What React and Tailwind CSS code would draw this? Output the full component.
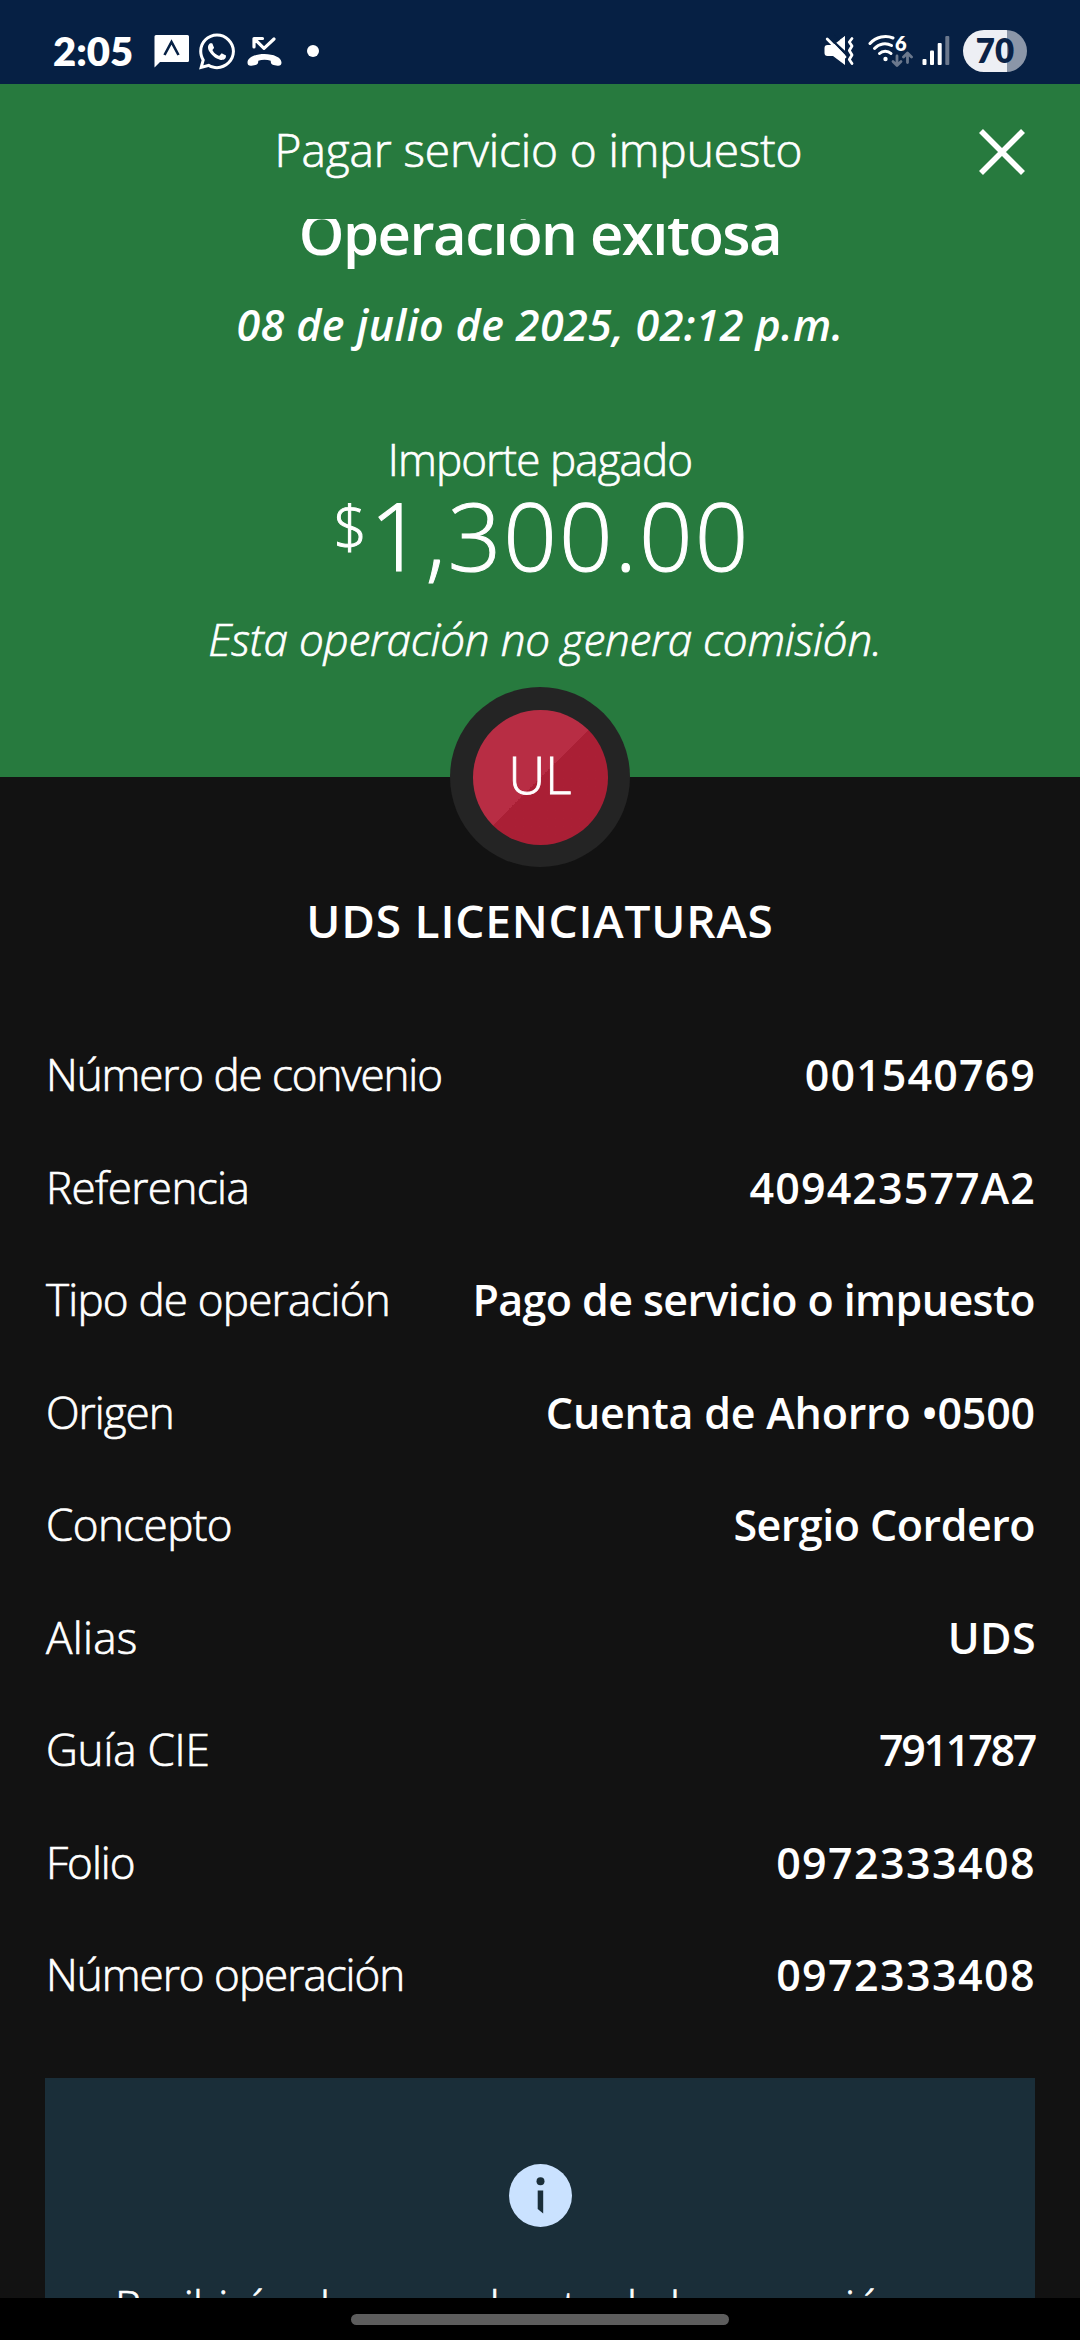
import { FaWhatsapp } from 'react-icons/fa';

const details = [
  { label: 'Número de convenio', value: '001540769', labelClass: 'tracking-[-1.1px]', valueClass: 'tracking-[1.1px] -mr-px' },
  { label: 'Referencia', value: '409423577A2', labelClass: 'tracking-[-0.6px]', valueClass: 'tracking-[1.1px] -mr-px' },
  { label: 'Tipo de operación', value: 'Pago de servicio o impuesto', labelClass: 'tracking-[-0.8px]', valueClass: 'tracking-[-0.6px]' },
  { label: 'Origen', value: 'Cuenta de Ahorro •0500', labelClass: 'tracking-[-1px]', valueClass: 'tracking-[-0.2px]' },
  { label: 'Concepto', value: 'Sergio Cordero', labelClass: 'tracking-[-0.6px]', valueClass: 'tracking-[-0.5px]' },
  { label: 'Alias', value: 'UDS', labelClass: 'tracking-[0.3px]', valueClass: 'tracking-[0.4px] -mr-px' },
  { label: 'Guía CIE', value: '7911787', labelClass: 'tracking-[-0.2px]', valueClass: 'tracking-[-2.3px]' },
  { label: 'Folio', value: '0972333408', labelClass: 'tracking-[-1px]', valueClass: 'tracking-[1.4px] -mr-px' },
  { label: 'Número operación', value: '0972333408', labelClass: 'tracking-[-1px]', valueClass: 'tracking-[1.4px] -mr-px' },
];

function ChatIcon() {
  return (
    <svg className="w-9 h-[42px]" viewBox="0 0 36 42" fill="none">
      <path d="M2 5H33.5Q35 5 35 6.500V30.500Q35 32 33.500 32H6L0.500 37.500V6.500Q0.500 5 2 5Z" fill="#fff" />
      <path d="M10.500 25L17.500 12L24.500 25" stroke="#062044" strokeWidth="2.600" />
    </svg>
  );
}

function MissedCallIcon() {
  return (
    <svg className="w-[35px] h-[42px]" viewBox="0 0 35 42" fill="none">
      <path
        d="M15.500 8.500H7V17M7.500 9L17 18.300L27 9"
        stroke="#fff"
        strokeWidth="3.200"
        strokeLinecap="round"
        strokeLinejoin="round"
      />
      <path
        d="M17.500 24C8.500 24 0.500 27.500 0.500 32.500C0.500 35 2 36 4.500 35.700L8.500 35C10.500 34.600 11.300 33.500 11.300 30.800C15 29.300 20 29.300 23.700 30.800C23.700 33.500 24.500 34.600 26.500 35L30.500 35.700C33 36 34.500 35 34.500 32.500C34.500 27.500 26.500 24 17.500 24Z"
        fill="#fff"
      />
    </svg>
  );
}

function MuteIcon() {
  return (
    <svg className="w-[31px] h-[42px]" viewBox="0 0 31 42" fill="none">
      <path d="M3.500 15H9L21 6V35L9 26H3.500Q0.500 26 0.500 23V18Q0.500 15 3.500 15Z" fill="#fff" />
      <path d="M0 3H9L21 16V25Z" fill="#062044" />
      <path d="M12.300 12.800L21 6.200V20.800Z" fill="#fff" />
      <path d="M3.200 9L21 27" stroke="#fff" strokeWidth="2.800" strokeLinecap="round" />
      <path
        d="M28 8.500L25.300 12L28 16L25.300 20.500L28 25L25.300 29.500L28 33.500"
        stroke="#fff"
        strokeWidth="2.800"
        strokeLinecap="round"
        strokeLinejoin="round"
      />
    </svg>
  );
}

function WifiIcon() {
  return (
    <div className="relative w-[45px] h-[42px]">
      <svg className="w-[45px] h-[42px]" viewBox="0 0 45 42" fill="none">
        <g stroke="#fff" strokeWidth="3" strokeLinecap="round">
          <path d="M2 13.500C8 6.500 18 5 25 8" />
          <path d="M6.500 18.500C11 13.500 18 12.500 23.500 15.500" />
          <path d="M11.500 23.500C14.500 20.500 20 20.500 23 23.500" />
        </g>
        <circle cx="17.500" cy="29" r="2.200" fill="#fff" />
        <g stroke="#6b788d" strokeWidth="2.800" strokeLinecap="round" strokeLinejoin="round">
          <path d="M29 26V35.500M25 31.500L29 35.500L33 31.500" />
          <path d="M39.500 32.500V23.500M35.500 27L39.500 23L43.500 27" />
        </g>
      </svg>
      <span className="absolute left-[27px] top-[3px] text-[20px] leading-5 font-extrabold font-['Lato',sans-serif]">6</span>
    </div>
  );
}

function SignalIcon() {
  return (
    <svg className="w-[28px] h-[42px]" viewBox="0 0 28 42" fill="#fff">
      <rect x="0.500" y="29" width="4" height="6" rx="1" />
      <rect x="8" y="20.500" width="4" height="14.500" rx="1" />
      <rect x="15.700" y="13" width="4" height="22" rx="1" />
      <rect x="23.300" y="6" width="4" height="29" rx="1" fill="#6b788d" />
    </svg>
  );
}

function StatusBar() {
  return (
    <div className="flex h-[84px] shrink-0 items-center justify-between bg-[#062044] pt-[18px] pl-[53px] pr-[53px] font-['Lato',sans-serif]">
      <div className="flex items-center">
        <span className="w-[101px] text-[40px] leading-[40px] font-extrabold">2:05</span>
        <ChatIcon />
        <FaWhatsapp className="ml-[9px] w-9 h-[41px]" />
        <div className="ml-3">
          <MissedCallIcon />
        </div>
        <div className="ml-[25px] size-3 rounded-full bg-white" />
      </div>
      <div className="flex items-center">
        <MuteIcon />
        <div className="ml-[13px]">
          <WifiIcon />
        </div>
        <div className="ml-[9px]">
          <SignalIcon />
        </div>
        <div className="ml-[13px] flex h-[42px] w-16 items-center justify-center rounded-full bg-linear-to-r from-[#edeff4] from-69% to-[#8b96a8] to-69% pb-[2px]">
          <span className="text-[33px] leading-[40px] font-extrabold text-[#0a2246]">70</span>
        </div>
      </div>
    </div>
  );
}

function TitleBar() {
  return (
    <div className="flex h-[135px] shrink-0 items-start pt-[38px] pr-[54px] pl-[99px]">
      <h1 className="flex-1 text-center text-[46px] leading-[54px] tracking-[-0.1px] [-webkit-text-stroke:0.7px_white]">
        Pagar servicio o impuesto
      </h1>
      <svg className="mt-[6px] size-12" viewBox="0 0 48 48" stroke="#fff" strokeWidth="5.600">
        <path d="M3 3L45 45M45 3L3 45" />
      </svg>
    </div>
  );
}

function Summary() {
  return (
    <div className="flex h-[558px] shrink-0 flex-col items-center overflow-hidden whitespace-nowrap">
      <h2 className="-mt-[21px] text-[58px] leading-[70px] font-semibold tracking-[-1.5px]">
        Operación exitosa
      </h2>
      <p className="mt-[28px] text-[43px] leading-[58px] font-semibold italic tracking-[0.4px]">
        08 de julio de 2025, 02:12 p.m.
      </p>
      <p className="mt-[76px] text-[44px] leading-[58px] tracking-[-0.9px] [-webkit-text-stroke:0.7px_white]">
        Importe pagado
      </p>
      <p className="flex h-[94px] items-baseline pl-1 leading-[94px] [-webkit-text-stroke:1px_white]">
        <span className="relative -top-[23px] mr-[3px] text-[58px]">$</span>
        <span className="text-[94px] tracking-[2px]">1,300.00</span>
      </p>
      <p className="mt-7 pl-[10px] text-[44px] leading-[58px] italic tracking-[-0.2px] [-webkit-text-stroke:0.7px_white]">
        Esta operación no genera comisión.
      </p>
    </div>
  );
}

function Avatar({ initials }) {
  return (
    <div className="z-10 -mt-[90px] flex size-[180px] shrink-0 items-center justify-center self-center rounded-full bg-[#242424]">
      <div className="flex size-[135px] items-center justify-center rounded-full bg-linear-135 from-[#b82d44] from-50% to-[#aa1f35] to-50% pb-[6px]">
        <span className="text-[51px] leading-[56px] [-webkit-text-stroke:0.8px_white]">{initials}</span>
      </div>
    </div>
  );
}

function DetailRow({ label, value, labelClass, valueClass }) {
  return (
    <div className="flex h-[112.5px] items-baseline justify-between whitespace-nowrap leading-[112px]">
      <dt className={`text-[44px] [-webkit-text-stroke:0.7px_white] ${labelClass}`}>{label}</dt>
      <dd className={`text-[43px] font-semibold ${valueClass}`}>{value}</dd>
    </div>
  );
}

function InfoCard() {
  return (
    <div className="mx-[45px] mt-[47.5px] flex min-h-0 flex-1 flex-col overflow-hidden bg-[#1a2e39] pt-[86px]">
      <svg className="size-[63px] shrink-0 self-center" viewBox="0 0 63 63">
        <circle cx="31.500" cy="31.500" r="31.500" fill="#cae2ff" />
        <circle cx="31.500" cy="17.300" r="4" fill="#1a2e39" />
        <path d="M28.700 26.500H34.200V49.500L28.700 45Z" fill="#1a2e39" />
      </svg>
      <p className="mt-[50px] pl-[70px] text-[44px] leading-[58px] tracking-[-0.8px] whitespace-nowrap [-webkit-text-stroke:0.7px_white]">
        Recibirás el comprobante de la operación
      </p>
    </div>
  );
}

export default function App() {
  return (
    <div className="flex h-[2340px] w-[1080px] flex-col overflow-hidden bg-[#121212] font-['Open_Sans',sans-serif] font-light text-white">
      <StatusBar />
      <header className="flex shrink-0 flex-col bg-[#277a3e]">
        <TitleBar />
        <Summary />
      </header>
      <Avatar initials="UL" />
      <h3 className="mt-[23px] text-center text-[46px] leading-[60px] font-semibold tracking-[0.8px]">
        UDS LICENCIATURAS
      </h3>
      <dl className="mt-[68px] shrink-0 pr-[45px] pl-[46px]">
        {details.map((item) => (
          <DetailRow key={item.label} {...item} />
        ))}
      </dl>
      <InfoCard />
      <div className="flex h-[42px] shrink-0 items-start justify-center bg-black pt-4">
        <div className="h-[11px] w-[378px] rounded-full bg-[#5d5d5d]" />
      </div>
    </div>
  );
}
